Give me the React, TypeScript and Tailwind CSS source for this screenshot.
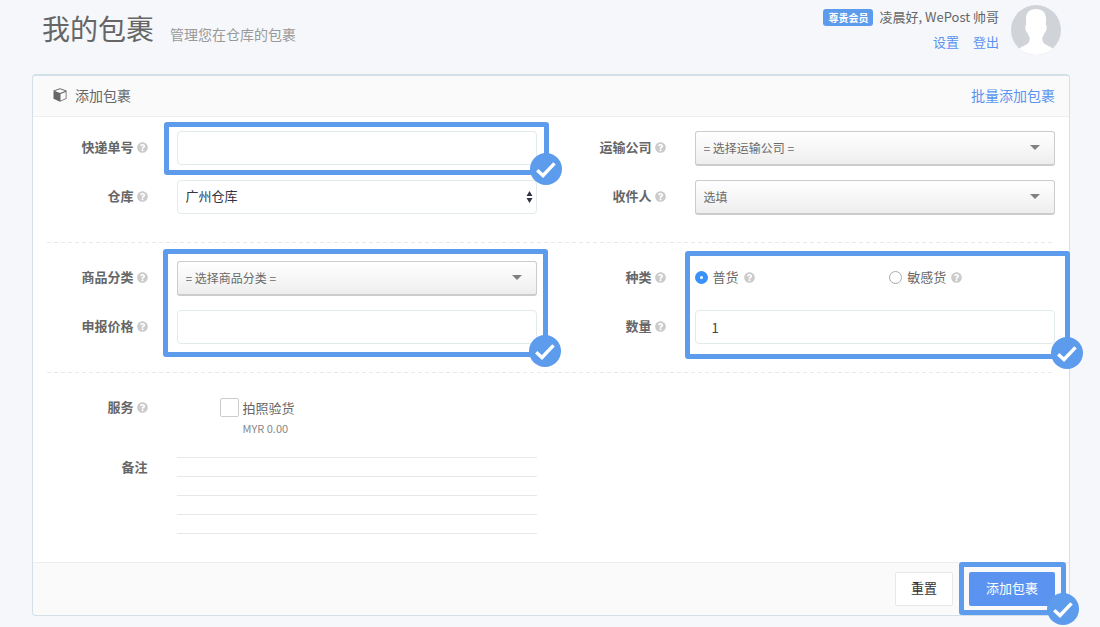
import { useState } from 'react';
import type { ReactNode } from 'react';
import { clsx } from 'clsx';
import { FaQuestionCircle } from 'react-icons/fa';

type LabelProps = {
  htmlFor?: string;
  text: string;
  help?: boolean;
};

type SelectBoxProps = {
  id: string;
  options: string[];
};

type ColumnProps = {
  labels: ReactNode;
  children: ReactNode;
};

const inputClass =
  'block h-[34px] w-full rounded-sm border border-[#e2eaec] bg-white px-4 text-[13px] text-[#444] outline-none';

const HelpIcon = () => (
  <FaQuestionCircle className="size-[11px] shrink-0 text-[#cbcbcb]" />
);

const CubeIcon = () => (
  <svg viewBox="0 0 14 14" className="h-[14px] w-[14px]">
    <path d="M7 .3 13.500 2.500V10.800L7 13.800.5 10.800V2.500Z" fill="#666" />
    <path d="M7 1.200 12.300 3 7 5 1.700 3Z" fill="#fafafa" />
    <path d="M7.500 6.100 12.700 4.100V10.300L7.500 12.700Z" fill="#fafafa" />
  </svg>
);

const Avatar = () => (
  <svg viewBox="0 0 50 50" className="size-[50px] rounded-full">
    <rect width="50" height="50" fill="#d0d4d9" />
    <path
      d="M25 4C18.500 4 15 7.500 15 14L15.200 19.500C14 20 14.200 22.500 14.700 25C15.200 27 15.800 28 16.800 28C17.200 30 17.800 31.500 18.800 33C18.800 37 17 39 13.500 40.500C10.500 42 8.500 43 6 45V50H44V45C41.500 43 39.500 42 36.500 40.500C33 39 31.200 37 31.200 33C32.200 31.500 32.800 30 33.200 28C34.200 28 34.800 27 35.300 25C35.800 22.500 36 20 34.800 19.500L35 14C35 7.500 31.500 4 25 4Z"
      fill="#fff"
    />
  </svg>
);

// Thick outline with a tick on its corner, drawn over the fields it surrounds
const Highlight = ({ className }: { className: string }) => (
  <div
    className={clsx(
      'pointer-events-none absolute z-10 rounded-[3px] border-[5px] border-[#5d9cec]',
      className,
    )}
  >
    <svg
      viewBox="0 0 32 32"
      className="absolute right-[-18px] bottom-[-15px] size-8"
    >
      <circle cx="16" cy="16" r="16" fill="#5d9cec" />
      <path
        d="M7.200 17.200 13 22.500 24.500 10.300"
        fill="none"
        stroke="#fff"
        strokeWidth="3.400"
      />
    </svg>
  </div>
);

const Label = ({ htmlFor, text, help = true }: LabelProps) => (
  <label
    htmlFor={htmlFor}
    className="flex h-8 items-center justify-end gap-[3px] text-[13px] font-bold whitespace-nowrap text-[#666]"
  >
    {text}
    {help && <HelpIcon />}
  </label>
);

const SelectBox = ({ id, options }: SelectBoxProps) => (
  <div className="relative">
    <select
      id={id}
      className="block h-[35px] w-full appearance-none rounded-[3px] border border-b-2 border-[#ccc] bg-linear-to-b from-white to-[#eee] pr-8 pl-2 text-xs text-[#6a6a6a] outline-none"
    >
      {options.map((option) => (
        <option key={option}>{option}</option>
      ))}
    </select>
    <svg
      viewBox="0 0 10 5"
      className="pointer-events-none absolute top-[14px] right-[15px] h-[5px] w-[10px]"
    >
      <path d="M0 0H10L5 5Z" fill="#808080" />
    </svg>
  </div>
);

const Column = ({ labels, children }: ColumnProps) => (
  <div className="flex w-1/2">
    <div className="flex w-1/4 flex-col gap-[17px] pr-[15px]">{labels}</div>
    <div className="w-3/4 px-[14px]">{children}</div>
  </div>
);

const Divider = () => (
  <svg className="mt-[27px] mb-[18px] block h-px w-full px-[14px]">
    <line
      x1="0"
      y1="0.5"
      x2="100%"
      y2="0.5"
      stroke="#e8eaea"
      strokeDasharray="4 3"
    />
  </svg>
);

const PageHeader = () => (
  <header className="flex h-[74px] items-start justify-between pr-[39px] pl-[42px]">
    <div className="flex items-baseline gap-4 pt-[7px]">
      <h1 className="text-[28px] leading-[42px] text-[#666]">我的包裹</h1>
      <span className="text-sm text-[#999]">管理您在仓库的包裹</span>
    </div>
    <div className="flex gap-3 pt-[5px]">
      <div className="text-right text-[13px] text-[#666]">
        <div className="flex h-6 items-center gap-[6px]">
          <span className="rounded-[3px] bg-[#5d9cec] px-[5px] text-[10px] leading-[17px] font-bold text-white">
            尊贵会员
          </span>
          <span>凌晨好, WePost 帅哥</span>
        </div>
        <nav className="flex h-[26px] items-center justify-end gap-[14px] text-[#5b93f0]">
          <a href="#settings">设置</a>
          <a href="#logout">登出</a>
        </nav>
      </div>
      <Avatar />
    </div>
  </header>
);

export default function App() {
  const [kind, setKind] = useState('normal');

  return (
    <div className="min-h-screen bg-[#f5f7fb] pb-3 font-['Noto_Sans_CJK_SC',sans-serif]">
      <PageHeader />
      <form
        className="mr-[30px] ml-8 rounded-sm border border-t-2 border-[#d3e0e7] bg-white"
        onSubmit={(e) => e.preventDefault()}
      >
        <div className="flex h-[41px] items-center justify-between rounded-t-sm border-b border-[#eee] bg-[#fafafa] pr-[14px] pb-[2px] pl-5 text-sm">
          <h2 className="flex items-center gap-2 text-[#666]">
            <CubeIcon />
            添加包裹
          </h2>
          <a href="#batch" className="text-[#5b93f0]">
            批量添加包裹
          </a>
        </div>

        <div className="pt-[14px] pb-7">
          <div className="flex">
            <Column
              labels={
                <>
                  <Label htmlFor="tracking" text="快递单号" />
                  <Label htmlFor="warehouse" text="仓库" />
                </>
              }
            >
              <div className="relative">
                <input id="tracking" className={inputClass} />
                <Highlight className="-top-[9px] -right-3 -bottom-[10px] -left-[13px]" />
              </div>
              <div className="relative mt-[15px]">
                <select
                  id="warehouse"
                  className="block h-[34px] w-full appearance-none rounded-[4px] border border-[#e2eaec] bg-white px-2 pb-[2px] text-[13px] text-[#334] outline-none"
                >
                  <option>广州仓库</option>
                </select>
                <svg
                  viewBox="0 0 7 12"
                  className="pointer-events-none absolute top-[11px] right-1 h-3 w-[7px]"
                >
                  <path d="M.5 5 3.500 0 6.500 5ZM.5 7 3.500 12 6.500 7Z" fill="#334" />
                </svg>
              </div>
            </Column>
            <Column
              labels={
                <>
                  <Label htmlFor="courier" text="运输公司" />
                  <Label htmlFor="receiver" text="收件人" />
                </>
              }
            >
              <div className="flex flex-col gap-[14px]">
                <SelectBox id="courier" options={['= 选择运输公司 =']} />
                <SelectBox id="receiver" options={['选填']} />
              </div>
            </Column>
          </div>

          <Divider />

          <div className="flex pb-px">
            <Column
              labels={
                <>
                  <Label htmlFor="category" text="商品分类" />
                  <Label htmlFor="price" text="申报价格" />
                </>
              }
            >
              <div className="relative flex flex-col gap-[14px]">
                <SelectBox id="category" options={['= 选择商品分类 =']} />
                <input id="price" className={inputClass} />
                <Highlight className="-top-3 -right-[11px] -bottom-[13px] -left-[14px]" />
              </div>
            </Column>
            <Column
              labels={
                <>
                  <Label text="种类" />
                  <Label htmlFor="quantity" text="数量" />
                </>
              }
            >
              <div className="relative flex flex-col gap-[17px]">
                <div className="flex h-8 items-center text-[13px] text-[#666]">
                  {[
                    { value: 'normal', text: '普货' },
                    { value: 'sensitive', text: '敏感货' },
                  ].map(({ value, text }) => (
                    <label
                      key={value}
                      className="flex items-center gap-[5px] first:w-[54%]"
                    >
                      <input
                        type="radio"
                        name="kind"
                        value={value}
                        checked={kind === value}
                        onChange={() => setKind(value)}
                        className="size-[13px] appearance-none rounded-full border border-[#aaa] bg-white checked:border-[5px] checked:border-[#3b91fb]"
                      />
                      {text}
                      <HelpIcon />
                    </label>
                  ))}
                </div>
                <input id="quantity" defaultValue="1" className={inputClass} />
                <Highlight className="-top-[10px] -right-[15px] -bottom-[15px] -left-[10px]" />
              </div>
            </Column>
          </div>

          <Divider />

          <div className="flex">
            <Column labels={<Label text="服务" />}>
              <div className="pt-[7px] pl-[43px]">
                <label className="flex items-center gap-1 text-[13px] leading-[19px] text-[#666]">
                  <input
                    type="checkbox"
                    className="size-[19px] appearance-none rounded-[2px] border border-[#ccc] bg-white checked:bg-[#5d9cec]"
                  />
                  拍照验货
                </label>
                <div className="pl-[23px] text-[11px] leading-[22px] text-[#888]">
                  MYR 0.00
                </div>
              </div>
            </Column>
          </div>

          <div className="mt-3 flex">
            <Column labels={<Label htmlFor="remark" text="备注" help={false} />}>
              <textarea
                id="remark"
                className="mt-[6px] block h-[77px] w-full resize-none bg-[repeating-linear-gradient(to_bottom,#e8e8e8_0px,#e8e8e8_1px,#fff_1px,#fff_19px)] px-2 text-[13px] leading-[19px] text-[#666] outline-none"
              />
            </Column>
          </div>
        </div>

        <div className="flex justify-end gap-4 rounded-b-sm border-t border-[#eee] bg-[#fafafa] py-[9px] pr-[14px] text-[13px]">
          <button
            type="reset"
            className="h-[34px] rounded-[2px] border border-[#e8e8e8] bg-white px-[15px] pb-[2px] text-[#333]"
          >
            重置
          </button>
          <div className="relative">
            <button
              type="submit"
              className="h-[34px] rounded-[2px] bg-[#5b93f0] px-[17px] pb-[2px] text-white"
            >
              添加包裹
            </button>
            <Highlight className="-top-[10px] -right-[11px] -bottom-[9px] -left-[10px]" />
          </div>
        </div>
      </form>
    </div>
  );
}
